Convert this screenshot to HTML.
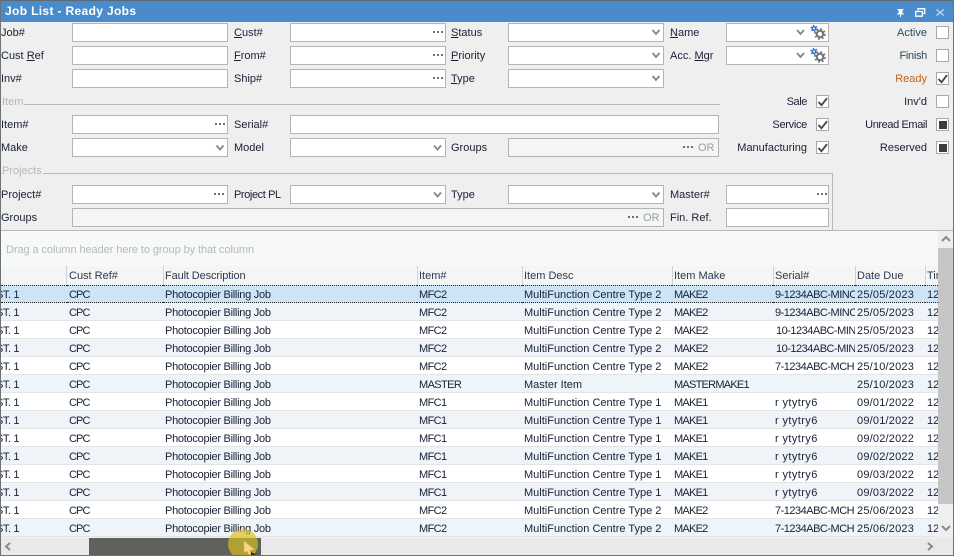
<!DOCTYPE html>
<html><head><meta charset="utf-8"><style>
html,body{margin:0;padding:0}
body{width:954px;height:556px;overflow:hidden;position:relative;background:#efefef;font:11px/13px "Liberation Sans",sans-serif;color:#1a1f36}
div,svg{position:absolute;box-sizing:border-box}
.l{white-space:nowrap;height:13px}
.r{text-align:right}
.b{background:#fff;border:1px solid #b4b4b4;height:19px}
.d{background:#f4f6f6}
.c{background:#fff;border:1px solid #a8a8a8;width:13px;height:13px}
.g{color:#b4b8b8}
.ln{background:#b8b8b8;height:1px}
table{position:absolute;left:1px;top:285px;width:937px;border-collapse:separate;border-spacing:0;table-layout:fixed}
td{height:18px;padding:4px 1px 0 2px;vertical-align:top;overflow:hidden;white-space:nowrap;box-sizing:border-box;border-bottom:1px solid #e2e4e6;font-size:11px;line-height:13px}
tr:nth-child(even){background:#eef4f8}
tr:nth-child(odd){background:#fff}
tr.sel td{background:#cde4f7;border-top:1px dotted #222;border-bottom:1px dotted #222;padding-top:3px}
td:nth-child(1){text-indent:-5px;padding-left:0;padding-right:0;letter-spacing:-.4px}
td:nth-child(2){letter-spacing:-.9px}
td:nth-child(3){letter-spacing:-.27px}
td:nth-child(4){letter-spacing:-.6px}
td:nth-child(6){letter-spacing:-.75px}
td:nth-child(7){letter-spacing:-.5px}
td:nth-child(8){letter-spacing:.2px}
.y{letter-spacing:.4px}
.h{top:270px;white-space:nowrap;height:13px;color:#2e3a4e}
.sp{top:266px;width:1px;height:19px;background:#cfd2d4}
</style></head><body>
<div style="left:0;top:0;width:954px;height:556px;border:1px solid #6b7378;border-top:1px solid #5d6a76;z-index:9;pointer-events:none"></div>
<div style="left:0;top:1px;width:954px;height:21px;background:#4a8ccb"></div>
<div class="l" style="left:5px;top:5px;color:#fff;font-weight:bold;font-size:12px;letter-spacing:.35px">Job List - Ready Jobs</div>
<svg style="left:0;top:0" width="954" height="22" viewBox="0 0 954 22"><path d="M897.500 9h6v1h-1v3.500h1.500v1h-3v2.500h-1v-2.500h-3v-1h1.500V10h-1z" fill="#fff"/><path d="M918 10.500V8.700h6.700v4.800h-2.200M915.700 11.500h6.600v4.700h-6.600z" fill="none" stroke="#fff" stroke-width="1.300"/><path d="M936.500 9.500l7.300 6M943.800 9.500l-7.300 6" stroke="#a9cdee" stroke-width="1.600"/></svg>

<div class="l" style="left:1px;top:27px">Job#</div>
<div class="l" style="left:1px;top:50px">Cust <u>R</u>ef</div>
<div class="l" style="left:1px;top:73px">Inv#</div>
<div class="l" style="left:234px;top:27px"><u>C</u>ust#</div>
<div class="l" style="left:234px;top:50px"><u>F</u>rom#</div>
<div class="l" style="left:234px;top:73px">Ship#</div>
<div class="l" style="left:451px;top:27px"><u>S</u>tatus</div>
<div class="l" style="left:451px;top:50px"><u>P</u>riority</div>
<div class="l" style="left:451px;top:73px"><u>T</u>ype</div>
<div class="l" style="left:670px;top:27px"><u>N</u>ame</div>
<div class="l" style="left:670px;top:50px">Acc. <u>M</u>gr</div>

<div class="b" style="left:72px;top:23px;width:156px"></div>
<div class="b" style="left:72px;top:46px;width:156px"></div>
<div class="b" style="left:72px;top:69px;width:156px"></div>
<div class="b" style="left:290px;top:23px;width:156px"></div>
<div class="b" style="left:290px;top:46px;width:156px"></div>
<div class="b" style="left:290px;top:69px;width:156px"></div>
<div class="b" style="left:508px;top:23px;width:156px"></div>
<div class="b" style="left:508px;top:46px;width:156px"></div>
<div class="b" style="left:508px;top:69px;width:156px"></div>
<div class="b" style="left:726px;top:23px;width:103px"></div>
<div class="b" style="left:726px;top:46px;width:103px"></div>

<div class="l g" style="left:2px;top:96px">Item</div>
<div class="ln" style="left:24px;top:104px;width:696px"></div>
<div class="l" style="left:1px;top:119px">Item#</div>
<div class="l" style="left:1px;top:142px">Make</div>
<div class="l" style="left:234px;top:119px">Serial#</div>
<div class="l" style="left:234px;top:142px">Model</div>
<div class="l" style="left:451px;top:142px">Groups</div>
<div class="b" style="left:72px;top:115px;width:156px"></div>
<div class="b" style="left:72px;top:138px;width:156px"></div>
<div class="b" style="left:290px;top:115px;width:429px"></div>
<div class="b" style="left:290px;top:138px;width:156px"></div>
<div class="b d" style="left:508px;top:138px;width:211px"></div>

<div style="left:0;top:173px;width:833px;height:58px;border:1px solid #b8b8b8;border-left:0;border-bottom:0"></div>
<div class="ln" style="left:1px;top:230px;width:952px"></div>
<div class="l g" style="left:2px;top:165px;background:#efefef;padding-right:1px">Projects</div>
<div class="l" style="left:1px;top:189px">Project#</div>
<div class="l" style="left:1px;top:212px">Groups</div>
<div class="l" style="left:234px;top:189px;letter-spacing:-.4px">Project PL</div>
<div class="l" style="left:451px;top:189px">Type</div>
<div class="l" style="left:670px;top:189px">Master#</div>
<div class="l" style="left:670px;top:212px">Fin. Ref.</div>
<div class="b" style="left:72px;top:185px;width:156px"></div>
<div class="b" style="left:290px;top:185px;width:156px"></div>
<div class="b" style="left:508px;top:185px;width:156px"></div>
<div class="b" style="left:726px;top:185px;width:103px"></div>
<div class="b d" style="left:72px;top:208px;width:592px"></div>
<div class="b" style="left:726px;top:208px;width:103px"></div>

<svg style="left:0;top:0" width="954" height="240" viewBox="0 0 954 240">
<g fill="none" stroke="#858585" stroke-width="1.800">
<path d="M652.500 30l3.500 4 3.500-4M652.500 53l3.500 4 3.500-4M652.500 76l3.500 4 3.500-4M797 30l3.500 4 3.500-4M797 53l3.500 4 3.500-4M434 145.500l3.500 4 3.500-4M216.500 145.500l3.500 4 3.500-4M434 192.500l3.500 4 3.500-4M652.500 192.500l3.500 4 3.500-4"/>
</g>
<g fill="#707070">
<path d="M433 31h2v2h-2zM437 31h2v2h-2zM441 31h2v2h-2zM433 54h2v2h-2zM437 54h2v2h-2zM441 54h2v2h-2zM433 77h2v2h-2zM437 77h2v2h-2zM441 77h2v2h-2zM215 123h2v2h-2zM219 123h2v2h-2zM223 123h2v2h-2zM214 193h2v2h-2zM218 193h2v2h-2zM222 193h2v2h-2zM817 193h2v2h-2zM821 193h2v2h-2zM825 193h2v2h-2zM683 146h2v2h-2zM687 146h2v2h-2zM691 146h2v2h-2zM628 216h2v2h-2zM632 216h2v2h-2zM636 216h2v2h-2z"/>
</g>
<g>
<circle cx="820" cy="34" r="3.200" fill="none" stroke="#747474" stroke-width="2"/>
<circle cx="820" cy="34" r="5" fill="none" stroke="#747474" stroke-width="1.600" stroke-dasharray="2 1.930"/>
<circle cx="814" cy="28.500" r="1.700" fill="none" stroke="#2a70b8" stroke-width="1.400"/>
<circle cx="814" cy="28.500" r="3" fill="none" stroke="#2a70b8" stroke-width="1.200" stroke-dasharray="1.500 1.640"/>
<circle cx="820" cy="57" r="3.200" fill="none" stroke="#747474" stroke-width="2"/>
<circle cx="820" cy="57" r="5" fill="none" stroke="#747474" stroke-width="1.600" stroke-dasharray="2 1.930"/>
<circle cx="814" cy="51.500" r="1.700" fill="none" stroke="#2a70b8" stroke-width="1.400"/>
<circle cx="814" cy="51.500" r="3" fill="none" stroke="#2a70b8" stroke-width="1.200" stroke-dasharray="1.500 1.640"/>
</g>
</svg>
<div class="l g" style="left:698px;top:142px;color:#9aa0a4">OR</div>
<div class="l g" style="left:643px;top:212px;color:#9aa0a4">OR</div>

<div class="l r" style="right:27px;top:27px;width:80px;color:#2a4a5a">Active</div>
<div class="l r" style="right:27px;top:50px;width:80px;color:#2a4a5a;letter-spacing:-.3px">Finish</div>
<div class="l r" style="right:27px;top:73px;width:80px;color:#c0641a">Ready</div>
<div class="l r" style="right:27px;top:96px;width:80px">Inv'd</div>
<div class="l r" style="right:27px;top:119px;width:100px;letter-spacing:-.4px">Unread Email</div>
<div class="l r" style="right:27px;top:142px;width:100px">Reserved</div>
<div class="l r" style="right:147px;top:96px;width:80px;letter-spacing:-.4px">Sale</div>
<div class="l r" style="right:147px;top:119px;width:80px;letter-spacing:-.3px">Service</div>
<div class="l r" style="right:147px;top:142px;width:100px">Manufacturing</div>
<div class="c" style="left:936px;top:26px"></div>
<div class="c" style="left:936px;top:49px"></div>
<div class="c" style="left:936px;top:72px"></div>
<div class="c" style="left:936px;top:95px"></div>
<div class="c" style="left:936px;top:118px"></div>
<div class="c" style="left:936px;top:141px"></div>
<div class="c" style="left:816px;top:95px"></div>
<div class="c" style="left:816px;top:118px"></div>
<div class="c" style="left:816px;top:141px"></div>
<svg style="left:0;top:0" width="954" height="160" viewBox="0 0 954 160"><g fill="none" stroke="#484848" stroke-width="1.900"><path d="M938.500 79l3 3.200 5.500-7M818.500 102l3 3.200 5.500-7M818.500 125l3 3.200 5.500-7M818.500 148l3 3.200 5.500-7"/></g><path d="M939 121h8v8h-8zM939 144h8v8h-8z" fill="#3c3c44"/></svg>

<div style="left:1px;top:231px;width:937px;height:35px;background:#f7f8f8"></div>
<div class="l" style="left:6px;top:244px;color:#b6baba;letter-spacing:-.08px">Drag a column header here to group by that column</div>
<div style="left:1px;top:266px;width:937px;height:19px;background:#f4f5f5"></div>
<div class="sp" style="left:66px"></div><div class="sp" style="left:163px"></div><div class="sp" style="left:417px"></div><div class="sp" style="left:522px"></div><div class="sp" style="left:672px"></div><div class="sp" style="left:773px"></div><div class="sp" style="left:855px"></div><div class="sp" style="left:925px"></div>
<div class="h" style="left:69px">Cust Ref#</div>
<div class="h" style="left:165px;letter-spacing:-.12px">Fault Description</div>
<div class="h" style="left:419px">Item#</div>
<div class="h" style="left:524px">Item Desc</div>
<div class="h" style="left:674px">Item Make</div>
<div class="h" style="left:775px">Serial#</div>
<div class="h" style="left:857px">Date Due</div>
<div class="h" style="left:927px;width:11px;overflow:hidden">Time</div>

<table><colgroup><col style="width:66px"><col style="width:96px"><col style="width:254px"><col style="width:105px"><col style="width:150px"><col style="width:101px"><col style="width:82px"><col style="width:70px"><col style="width:13px"></colgroup>
<tr class="sel"><td>ST. 1</td><td>CPC</td><td>Photocopier Billing Job</td><td>MFC2</td><td>MultiFunction Centre Type 2</td><td>MAKE2</td><td>9-1234ABC-MINOLTA</td><td>25/05/2023</td><td>12</td></tr>
<tr><td>ST. 1</td><td>CPC</td><td>Photocopier Billing Job</td><td>MFC2</td><td>MultiFunction Centre Type 2</td><td>MAKE2</td><td>9-1234ABC-MINOLTA</td><td>25/05/2023</td><td>12</td></tr>
<tr><td>ST. 1</td><td>CPC</td><td>Photocopier Billing Job</td><td>MFC2</td><td>MultiFunction Centre Type 2</td><td>MAKE2</td><td><span style="margin-left:1px">10-1234ABC-MINOLTA</span></td><td>25/05/2023</td><td>12</td></tr>
<tr><td>ST. 1</td><td>CPC</td><td>Photocopier Billing Job</td><td>MFC2</td><td>MultiFunction Centre Type 2</td><td>MAKE2</td><td><span style="margin-left:1px">10-1234ABC-MINOLTA</span></td><td>25/05/2023</td><td>12</td></tr>
<tr><td>ST. 1</td><td>CPC</td><td>Photocopier Billing Job</td><td>MFC2</td><td>MultiFunction Centre Type 2</td><td>MAKE2</td><td>7-1234ABC-MCH</td><td>25/10/2023</td><td>12</td></tr>
<tr><td>ST. 1</td><td>CPC</td><td>Photocopier Billing Job</td><td>MASTER</td><td>Master Item</td><td>MASTERMAKE1</td><td></td><td>25/10/2023</td><td>12</td></tr>
<tr><td>ST. 1</td><td>CPC</td><td>Photocopier Billing Job</td><td>MFC1</td><td>MultiFunction Centre Type 1</td><td>MAKE1</td><td><span class="y">r ytytry6</span></td><td>09/01/2022</td><td>12</td></tr>
<tr><td>ST. 1</td><td>CPC</td><td>Photocopier Billing Job</td><td>MFC1</td><td>MultiFunction Centre Type 1</td><td>MAKE1</td><td><span class="y">r ytytry6</span></td><td>09/01/2022</td><td>12</td></tr>
<tr><td>ST. 1</td><td>CPC</td><td>Photocopier Billing Job</td><td>MFC1</td><td>MultiFunction Centre Type 1</td><td>MAKE1</td><td><span class="y">r ytytry6</span></td><td>09/02/2022</td><td>12</td></tr>
<tr><td>ST. 1</td><td>CPC</td><td>Photocopier Billing Job</td><td>MFC1</td><td>MultiFunction Centre Type 1</td><td>MAKE1</td><td><span class="y">r ytytry6</span></td><td>09/02/2022</td><td>12</td></tr>
<tr><td>ST. 1</td><td>CPC</td><td>Photocopier Billing Job</td><td>MFC1</td><td>MultiFunction Centre Type 1</td><td>MAKE1</td><td><span class="y">r ytytry6</span></td><td>09/03/2022</td><td>12</td></tr>
<tr><td>ST. 1</td><td>CPC</td><td>Photocopier Billing Job</td><td>MFC1</td><td>MultiFunction Centre Type 1</td><td>MAKE1</td><td><span class="y">r ytytry6</span></td><td>09/03/2022</td><td>12</td></tr>
<tr><td>ST. 1</td><td>CPC</td><td>Photocopier Billing Job</td><td>MFC2</td><td>MultiFunction Centre Type 2</td><td>MAKE2</td><td>7-1234ABC-MCH</td><td>25/06/2023</td><td>12</td></tr>
<tr><td>ST. 1</td><td>CPC</td><td>Photocopier Billing Job</td><td>MFC2</td><td>MultiFunction Centre Type 2</td><td>MAKE2</td><td>7-1234ABC-MCH</td><td>25/06/2023</td><td>12</td></tr>
</table>

<div style="left:938px;top:231px;width:15px;height:307px;background:#efefef"></div>
<div style="left:938px;top:248px;width:15px;height:256px;background:#c6c6c6"></div>
<div style="left:1px;top:538px;width:952px;height:17px;background:#e9e9e9"></div>
<div style="left:89px;top:538px;width:172px;height:17px;background:#5f615d"></div>
<svg style="left:0;top:0;z-index:5" width="954" height="556" viewBox="0 0 954 556">
<g fill="none" stroke="#8a8a8a" stroke-width="2"><path d="M942 241l4-4 4 4M942 526l4 4 4-4M10 543l-4 3.500 4 3.500M928 543l4 3.500-4 3.500"/></g>
<circle cx="243" cy="544" r="15" fill="#d8c020" fill-opacity=".68"/>
<path d="M244 541v12l3-2 2 4 2-1-1-4h5z" fill="#f3d98a" stroke="#e0b040" stroke-width=".6"/>
<path d="M251 552l5 3h-5z" fill="#222"/>
</svg>
</body></html>
